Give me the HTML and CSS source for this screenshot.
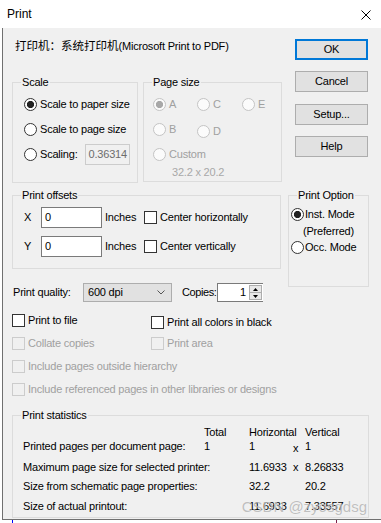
FILE: index.html
```html
<html>
  <head>
    <link rel="stylesheet" href="styles.css">
    <title>Print</title>
  </head>
  <body>
    <div class="titlebar">
      <span>Print</span>
      <svg class="close" width="10" height="10" viewBox="0 0 10 10"><path d="M0.5 0.5L9.5 9.5M9.5 0.5L0.5 9.5" stroke="#000" stroke-width="1"/></svg>
    </div>
    <div class="main">
      <div class="top">
        <div class="left">
          <div class="printer"><span class="cjk">打印机：系统打印机</span>(Microsoft Print to PDF)</div>

          <div class="groups">
            <div class="group scale">
              <div class="legend">Scale</div>
              <div class="rows">
                <div class="opt"><span class="radio on"></span>Scale to paper size</div>
                <div class="opt"><span class="radio"></span>Scale to page size</div>
                <div class="opt"><span class="radio"></span>Scaling:<span class="field disabled">0.36314</span></div>
              </div>
            </div>
            <div class="group pagesize">
              <div class="legend">Page size</div>
              <div class="psgrid">
                <div class="opt dim"><span class="radio on"></span>A</div>
                <div class="opt dim"><span class="radio"></span>C</div>
                <div class="opt dim"><span class="radio"></span>E</div>
                <div class="opt dim"><span class="radio"></span>B</div>
                <div class="opt dim low"><span class="radio"></span>D</div>
                <div></div>
                <div class="opt dim wide"><span class="radio"></span>Custom</div>
              </div>
              <div class="custom-size">32.2 x 20.2</div>
            </div>
          </div>

          <div class="group offsets">
            <div class="legend">Print offsets</div>
            <div class="offrow">
              <span class="axis">X</span><span class="field">0</span><span class="unit">Inches</span><span class="check"></span>Center horizontally
            </div>
            <div class="offrow">
              <span class="axis">Y</span><span class="field">0</span><span class="unit">Inches</span><span class="check"></span>Center vertically
            </div>
          </div>

          <div class="quality">
            <span class="qlabel">Print quality:</span>
            <span class="select">600 dpi<svg width="8" height="5" viewBox="0 0 8 5"><path d="M0.5 0.5L4 4L7.5 0.5" fill="none" stroke="#555" stroke-width="1"/></svg></span>
            <span class="copies">Copies:</span>
            <span class="spin">
              <span class="spin-val">1</span>
              <span class="spin-btns">
                <span class="arrow"><svg width="5" height="3" viewBox="0 0 5 3"><path d="M0 3L2.5 0L5 3Z" fill="#000"/></svg></span>
                <span class="arrow"><svg width="5" height="3" viewBox="0 0 5 3"><path d="M0 0L2.5 3L5 0Z" fill="#000"/></svg></span>
              </span>
            </span>
          </div>

          <div class="opts">
            <div class="item"><span class="check"></span>Print to file</div>
            <div class="item lower"><span class="check"></span>Print all colors in black</div>
            <div class="item dim"><span class="check"></span>Collate copies</div>
            <div class="item dim"><span class="check"></span>Print area</div>
            <div class="item dim span"><span class="check"></span>Include pages outside hierarchy</div>
            <div class="item dim span"><span class="check"></span>Include referenced pages in other libraries or designs</div>
          </div>
        </div>

        <div class="right">
          <div class="btn ok">OK</div>
          <div class="btn cancel">Cancel</div>
          <div class="btn setup">Setup...</div>
          <div class="btn help">Help</div>
          <div class="group option">
            <div class="legend">Print Option</div>
            <div class="mode"><span class="radio on"></span>Inst. Mode</div>
            <div class="preferred">(Preferred)</div>
            <div class="mode occ"><span class="radio"></span>Occ. Mode</div>
          </div>
        </div>
      </div>

      <div class="group stats">
        <div class="legend">Print statistics</div>
        <div class="stat-grid">
          <span></span><span>Total</span><span>Horizontal</span><span></span><span>Vertical</span>
          <span>Printed pages per document page:</span><span>1</span><span>1</span><span class="x low">x</span><span>1</span>
          <span>Maximum page size for selected printer:</span><span></span><span>11.6933</span><span class="x">x</span><span>8.26833</span>
          <span>Size from schematic page properties:</span><span></span><span>32.2</span><span></span><span>20.2</span>
          <span>Size of actual printout:</span><span></span><span>11.6933</span><span></span><span>7.33557</span>
        </div>
        <div class="mark">CSDN @zyosgdsg</div>
      </div>
    </div>
    <div class="desk">
      <span class="wire blue"></span>
      <span class="wire red"></span>
    </div>
  </body>
</html>
```

FILE: styles.css
```css
*{
  box-sizing: border-box;
}
html, body{
  margin: 0;
}
body{
  width: 381px;
  height: 523px;
  overflow: hidden;
  background: #fff;
  color: #000;
  font: 11px/13px "Liberation Sans", Arial, "Noto Sans CJK SC", sans-serif;
  letter-spacing: -0.2px;
}
.titlebar{
  height: 28px;
  display: flex;
  align-items: center;
  justify-content: space-between;
  padding: 1px 10px 0 7px;
  font-size: 12px;
  letter-spacing: 0;
  background: #fff;
}
.main{
  margin-left: 2px;
  height: 492px;
  padding-left: 9px;
  border-left: 1px solid #707070;
  border-bottom: 1px solid #707070;
  background: #f0f0f0;
}
.top{
  display: flex;
  align-items: flex-start;
}
.left{
  width: 270px;
  flex: none;
}
.right{
  width: 81px;
  margin-left: 6px;
  flex: none;
}
.printer{
  margin-top: 10px;
  height: 14px;
  line-height: 14px;
  white-space: nowrap;
  padding-left: 3px;
}
.cjk{
  font-family: "Noto Sans CJK SC", sans-serif;
  font-size: 11.5px;
  letter-spacing: 0;
}

/* group boxes */
.group{
  border: 1px solid #dcdcdc;
}
.legend{
  display: table;
  height: 13px;
  line-height: 13px;
  margin: -7px 0 0 8px;
  padding: 0 1px;
  background: #f0f0f0;
}
.groups{
  display: flex;
  align-items: flex-start;
  gap: 5px;
  margin-top: 30px;
}
.scale{
  width: 126px;
  height: 101px;
}
.pagesize{
  width: 139px;
  height: 100px;
}
.rows{
  margin-top: 3px;
}
.opt{
  display: flex;
  align-items: center;
  height: 25px;
  padding-left: 11px;
  white-space: nowrap;
}
.radio{
  width: 13px;
  height: 13px;
  flex: none;
  margin-right: 3px;
  border: 1px solid #333;
  border-radius: 50%;
  background: #fff;
}
.radio.on{
  background: radial-gradient(circle, #222 0 3.3px, #fff 3.9px);
}
.dim{
  color: #a0a0a0;
}
.dim .radio{
  border-color: #c4c4c4;
  background: #fbfbfb;
}
.dim .radio.on{
  background: radial-gradient(circle, #a8a8a8 0 3.3px, #fbfbfb 3.9px);
}
.field{
  display: inline-block;
  width: 61px;
  height: 21px;
  line-height: 19px;
  padding-left: 3px;
  border: 1px solid #7a7a7a;
  background: #fff;
  overflow: hidden;
}
.field.disabled{
  width: 45px;
  margin-left: 7px;
  border-color: #cccccc;
  background: #f0f0f0;
  color: #6d6d6d;
}
.psgrid{
  display: grid;
  grid-template-columns: 44px 45px auto;
  grid-template-rows: 25px 25px 24px;
  margin-top: 3px;
}
.psgrid .opt{
  padding-left: 9px;
}
.psgrid .low{
  padding-top: 3px;
}
.psgrid .wide{
  grid-column: 1 / 4;
}
.custom-size{
  padding-left: 28px;
  color: #a8a8a8;
}

/* offsets */
.offsets{
  width: 269px;
  height: 74px;
  margin-top: 12px;
}
.offsets .legend{
  margin-bottom: 1px;
}
.offrow{
  display: flex;
  align-items: center;
  height: 29px;
  padding-left: 11px;
  white-space: nowrap;
}
.axis{
  width: 17px;
}
.unit{
  width: 39px;
  margin-left: 3px;
}
.check{
  width: 13px;
  height: 13px;
  flex: none;
  margin-right: 3px;
  border: 1px solid #333;
  background: #fff;
}
.dim .check{
  border-color: #cccccc;
  background: #f0f0f0;
}

/* quality row */
.quality{
  display: flex;
  align-items: center;
  height: 19px;
  margin-top: 14px;
  padding-left: 1px;
  white-space: nowrap;
}
.qlabel{
  width: 70px;
}
.select{
  display: flex;
  align-items: center;
  justify-content: space-between;
  width: 89px;
  height: 19px;
  padding: 0 6px 0 4px;
  border: 1px solid #adadad;
  background: #e1e1e1;
}
.copies{
  width: 35px;
  flex: none;
  margin-left: 10px;
  letter-spacing: -0.4px;
}
.spin{
  display: flex;
  width: 46px;
  height: 19px;
  border: 1px solid #7a7a7a;
  border-right: none;
  background: #fff;
}
.spin-val{
  flex: 1;
  text-align: right;
  padding-right: 3px;
  line-height: 17px;
}
.spin-btns{
  display: flex;
  flex-direction: column;
  width: 13px;
  border: 1px solid #adadad;
  margin: 1px 1px 1px 0;
}
.arrow{
  flex: 1;
  display: flex;
  align-items: center;
  justify-content: center;
  background: #e8e8e8;
}
.arrow + .arrow{
  border-top: 1px solid #adadad;
}

/* check options */
.opts{
  display: grid;
  grid-template-columns: 139px auto;
  grid-auto-rows: 23px;
  margin-top: 7px;
}
.item{
  display: flex;
  align-items: center;
  white-space: nowrap;
}
.item.lower{
  padding-top: 3px;
}
.item.span{
  grid-column: 1 / 3;
}

/* buttons */
.btn{
  width: 73px;
  height: 21px;
  margin-left: 7px;
  border: 1px solid #adadad;
  background: #e1e1e1;
  text-align: center;
  line-height: 19px;
}
.ok{
  margin-top: 11px;
  border: 2px solid #0078d7;
  line-height: 17px;
}
.cancel{
  margin-top: 11px;
}
.setup{
  margin-top: 12px;
}
.help{
  margin-top: 11px;
}
.option{
  height: 92px;
  margin-top: 38px;
}
.mode{
  display: flex;
  align-items: center;
  height: 20px;
  margin-top: 2px;
  padding-left: 2px;
  white-space: nowrap;
}
.mode .radio{
  margin-right: 1px;
}
.mode.occ{
  height: 18px;
  margin-top: 0;
}
.preferred{
  height: 14px;
  line-height: 14px;
  padding-left: 14px;
}

/* statistics */
.stats{
  position: relative;
  width: 357px;
  height: 103px;
  margin-top: 14px;
}
.stat-grid{
  display: grid;
  grid-template-columns: 181px 45px 44px 12px auto;
  grid-template-rows: 14px 21px 19px 20px 14px;
  line-height: 14px;
  margin-top: 3px;
  padding-left: 10px;
  white-space: nowrap;
}
.stat-grid .low{
  padding-top: 2px;
}
.mark{
  position: absolute;
  right: 1px;
  top: 83px;
  font-size: 15px;
  line-height: 16px;
  letter-spacing: 0;
  color: rgba(140, 140, 140, 0.55);
  text-shadow: 0 0 1px rgba(255, 255, 255, 0.8);
}

/* what shows of the canvas below the dialog */
.desk{
  display: flex;
  height: 3px;
}
.wire{
  width: 1px;
  height: 3px;
}
.wire.blue{
  margin-left: 12px;
  background: #0000ff;
}
.wire.red{
  margin-left: 323px;
  background: #7a1f4a;
}
```
